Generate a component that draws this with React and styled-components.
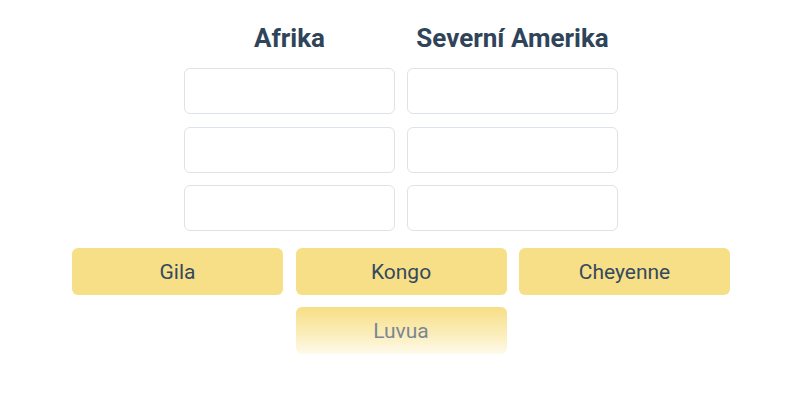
import React from 'react'
import styled, { createGlobalStyle } from 'styled-components'

const GlobalStyle = createGlobalStyle`
    html, body {
        margin : 0;
        padding : 0;
        background : #ffffff;
    }
    body {
        font-family : Roboto, "Liberation Sans", sans-serif;
        color : #34495e;
    }
`

const columns = [
    { name : 'Afrika', slots : 3 },
    { name : 'Severní Amerika', slots : 3 },
]

const options = [
    { label : 'Gila' },
    { label : 'Kongo' },
    { label : 'Cheyenne' },
    { label : 'Luvua', fading : true },
]

function App() {
    return (
        <Page>
            <GlobalStyle />
            <Board>
                {columns.map((col) => (
                    <Column key={col.name}>
                        <Heading>{col.name}</Heading>
                        {Array.from({ length : col.slots }).map((_, i) => (
                            <Slot key={i} />
                        ))}
                    </Column>
                ))}
            </Board>
            <Pool>
                {options.map((opt) => (
                    <Chip key={opt.label} fading={opt.fading ? 1 : 0}>
                        {opt.label}
                    </Chip>
                ))}
            </Pool>
        </Page>
    )
}

export default App

const Page = styled.div`
    width : 800px;
    height : 400px;
    box-sizing : border-box;
    padding-top : 22px;
    padding-left : 2px;
    display : flex;
    flex-direction : column;
    align-items : center;
`

const Board = styled.div`
    display : flex;
    gap : 12px;
`

const Column = styled.div`
    display : flex;
    flex-direction : column;
    gap : 12.5px;
    width : 211px;
`

const Heading = styled.h2`
    margin : 0 0 1.5px 0;
    height : 32px;
    line-height : 32px;
    font-size : 26px;
    font-weight : 700;
    text-align : center;
    color : #2f4459;
`

const Slot = styled.div`
    box-sizing : border-box;
    height : 46px;
    border : 1px solid #dde3e8;
    border-radius : 6px;
    background : #ffffff;
`

const Pool = styled.div`
    margin-top : 17px;
    width : 659px;
    display : flex;
    flex-wrap : wrap;
    justify-content : center;
    gap : 12px 12.5px;
`

const Chip = styled.div`
    box-sizing : border-box;
    width : 211px;
    height : 47px;
    border-radius : 6px;
    display : flex;
    align-items : center;
    justify-content : center;
    font-size : 21px;
    color : ${(p) => (p.fading ? '#7a8793' : '#34495e')};
    background : ${(p) =>
        p.fading
            ? 'linear-gradient(to bottom, #f7de86 0%, #fbeebc 60%, #fefaec 100%)'
            : '#f7df87'};
`
